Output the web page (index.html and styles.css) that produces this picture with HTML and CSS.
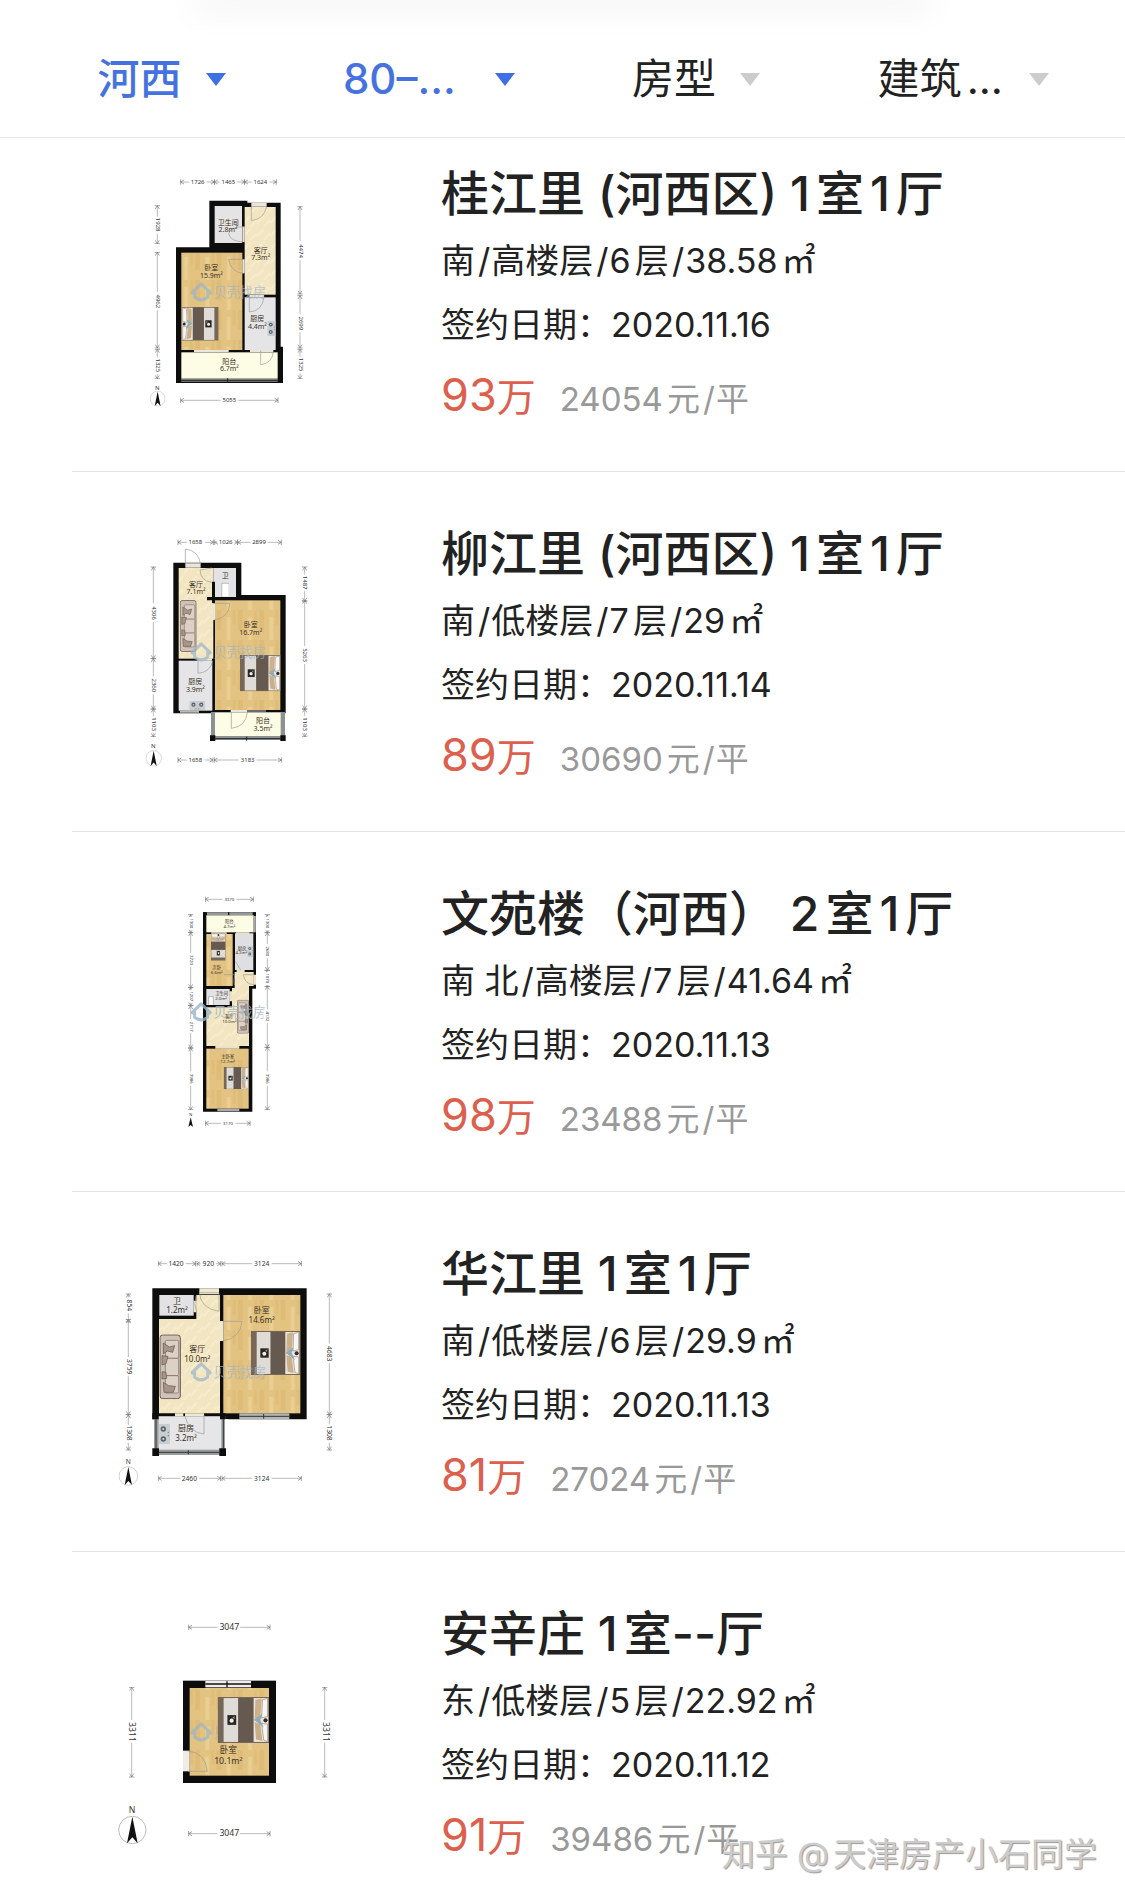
FILE: index.html
```html
<!DOCTYPE html>
<html lang="zh-CN">
<head>
<meta charset="utf-8">
<meta name="viewport" content="width=device-width, initial-scale=1">
<title>成交房源</title>
<link rel="stylesheet" href="styles.css">
</head>
<body>
<svg class="defs" aria-hidden="true">
  <defs>
    <pattern id="wood" width="64" height="90" patternUnits="userSpaceOnUse">
      <rect width="64" height="90" fill="#e3c381"/>
      <rect width="14" height="60" fill="#debb76"/>
      <rect x="30" y="20" width="12" height="70" fill="#eace92"/>
      <rect x="48" width="9" height="44" fill="#dfbd79"/>
    </pattern>
    <pattern id="marble" width="40" height="40" patternUnits="userSpaceOnUse">
      <rect width="40" height="40" fill="#f2e6c2"/>
      <path d="M0 30L20 8M22 40L40 20" stroke="#f8edcf" stroke-width="5"/>
    </pattern>
    <marker id="tip" viewBox="0 0 14 18" refX="12" refY="9" markerWidth="14" markerHeight="18" markerUnits="userSpaceOnUse" orient="auto-start-reverse">
      <path d="M2 3L12 9L2 15M12 1V17" fill="none" stroke="#777" stroke-width="2"/>
    </marker>
    <symbol id="bed" viewBox="0 0 147 132" preserveAspectRatio="none">
      <rect width="147" height="132" fill="#776758"/>
      <rect x="17" y="3" width="42" height="126" fill="#dfdbd6"/>
      <rect x="59" y="3" width="44" height="126" fill="#655950"/>
      <rect x="103" y="3" width="42" height="126" fill="#e9e5df"/>
      <path d="M108 8L126 4L122 60L106 66Z" fill="#cdb18a"/>
      <path d="M106 72L122 78L128 126L110 122Z" fill="#c9ae88"/>
      <path d="M128 8L143 4L143 56L126 60ZM126 76L143 78L143 128L132 124Z" fill="#f8f6f2" stroke="#9a8d7e" stroke-width="2"/>
      <path d="M104 66L128 48L122 66L132 88L118 76Z" fill="#8eabb6"/>
      <circle cx="137" cy="67" r="6" fill="#332d2b"/>
      <rect x="28" y="52" width="25" height="28" fill="#29251f"/>
      <circle cx="40" cy="68" r="6" fill="#eee"/>
      <path d="M42 59L49 55L48 63Z" fill="#9f9b7e"/>
    </symbol>
    <symbol id="sofa" viewBox="0 0 65 195" preserveAspectRatio="none">
      <rect x="2" y="2" width="61" height="191" rx="8" fill="#d0c2b6" stroke="#675a52" stroke-width="3"/>
      <rect x="18" y="18" width="40" height="54" rx="4" fill="#ddd0c4" stroke="#75675d" stroke-width="2"/>
      <rect x="18" y="72" width="40" height="52" rx="4" fill="#ddd0c4" stroke="#75675d" stroke-width="2"/>
      <rect x="18" y="124" width="40" height="52" rx="4" fill="#ddd0c4" stroke="#75675d" stroke-width="2"/>
      <path d="M12 26L30 38L46 34L40 54L24 50L12 58ZM8 64L26 66L20 88L8 92ZM8 112L20 114L22 132L8 134ZM12 144L28 154L48 156L42 174L14 174Z" fill="#a7958a" stroke="#5d514a" stroke-width="2"/>
    </symbol>
    <symbol id="stove" viewBox="0 0 34 62" preserveAspectRatio="none">
      <rect width="34" height="62" fill="#c8cdd1"/>
      <circle cx="14" cy="16" r="8" fill="#59626a"/><circle cx="14" cy="46" r="8" fill="#59626a"/>
      <circle cx="14" cy="16" r="3" fill="#ddd"/><circle cx="14" cy="46" r="3" fill="#ddd"/>
      <circle cx="29" cy="26" r="2" fill="#777"/><circle cx="29" cy="36" r="2" fill="#777"/>
    </symbol>
    <symbol id="north" viewBox="0 0 88 88">
      <circle cx="44" cy="44" r="41" fill="#fff" stroke="#bcbcbc" stroke-width="3"/>
      <path d="M44 4L60 84L44 66L28 84Z" fill="#111"/>
    </symbol>
    <symbol id="brand" viewBox="0 0 240 64">
      <path d="M12 36L4 32L32 5L60 32L52 36M12 28V46Q32 62 52 46V28" fill="none" stroke="#9ab4cc" stroke-width="9" stroke-linejoin="round"/>
      <text x="70" y="46" font-size="40" fill="#9fb6ca">贝壳找房</text>
    </symbol>
  </defs>
</svg>

<header class="filters">
  <div class="card-shade"></div>
  <nav class="filter-row" aria-label="筛选">
    <button class="filter active" type="button"><span>河西</span></button>
    <button class="filter active wide" type="button"><span>80–...</span></button>
    <button class="filter" type="button"><span>房型</span></button>
    <button class="filter wide" type="button"><span>建筑...</span></button>
  </nav>
</header>

<main class="list">
  <article class="item">
    <svg class="plan" viewBox="0 -3 720 786" role="img" aria-label="桂江里户型图">
      <path d="M298 122H412V128H512V560H519V669H198V262H298Z" fill="#0d0d0d"/>
      <rect x="314" y="138" width="82" height="111" fill="#e5e4e5"/>
      <rect x="404" y="141" width="93" height="263" fill="url(#marble)"/>
      <rect x="214" y="278" width="183" height="292" fill="url(#wood)"/>
      <rect x="404" y="412" width="93" height="158" fill="#e5e5e7"/>
      <rect x="214" y="577" width="289" height="79" fill="#fdfce4"/>
      <path d="M424 128H470V140H424ZM397 200H404V246H397ZM397 298H404V340H397ZM418 405H462V412H418ZM252 570H356V576H252ZM420 570H490V576H420Z" fill="#ebe6dc"/>
      <path d="M214 661H503" stroke="#8a8d8d" stroke-width="8"/><path d="M214 661H503M353 655V667" stroke="#222" stroke-width="3"/>
      <path class="door" d="M424 134V182Q462 178 470 140M404 200Q358 200 356 222Q362 244 400 246M404 298H356Q362 336 400 340M418 410V456Q456 454 462 412M452 572V614Q486 610 490 576"/>
      <use href="#bed" x="-326" y="441" width="111" height="101" transform="scale(-1 1)"/>
      <use href="#stove" x="472" y="482" width="25" height="46"/>
      <use href="#brand" x="242" y="366" width="236" height="64" opacity=".7"/>
      <g class="room"><text x="355" y="195">卫生间</text><text x="354" y="217">2.8m²</text><text x="452" y="278">客厅</text><text x="452" y="300">7.3m²</text><text x="304" y="331">卧室</text><text x="304" y="353">15.9m²</text><text x="442" y="484">厨房</text><text x="442" y="507">4.4m²</text><text x="358" y="612">阳台</text><text x="358" y="634">6.7m²</text></g>
      <g class="dim"><path d="M212 66H313"/><path d="M313 66H404"/><path d="M404 66H499"/><path d="M142 137V251"/><path d="M142 277V564"/><path d="M142 568V656"/><path d="M570 140V402"/><path d="M570 407V564"/><path d="M570 568V656"/><path d="M212 721H504"/></g>
      <g class="num"><text x="263" y="72">1726</text><text x="355" y="72">1465</text><text x="451" y="72">1624</text><text x="358" y="727">5055</text><text transform="translate(137 194) rotate(90)">1928</text><text transform="translate(137 424) rotate(90)">4962</text><text transform="translate(137 616) rotate(90)">1325</text><text transform="translate(566 273) rotate(90)">4474</text><text transform="translate(566 490) rotate(90)">2699</text><text transform="translate(566 614) rotate(90)">1325</text><text x="142" y="690">N</text></g>
      <use href="#north" x="119" y="692" width="48" height="48"/>
    </svg>
    <div class="info">
      <h2>桂江里 (河西区) 1室1厅</h2>
      <p>南<i>/</i>高楼层<i>/</i>6层<i>/</i>38.58<b>㎡</b></p>
      <p>签约日期：2020.11.16</p>
      <div class="cost"><strong>93<small>万</small></strong><span>24054元<i>/</i>平</span></div>
    </div>
  </article>

  <article class="item">
    <svg class="plan" viewBox="0 -3 720 786" role="img" aria-label="柳江里户型图">
      <path d="M190 128H394V225H527V580H190Z" fill="#0d0d0d"/>
      <rect x="206" y="144" width="104" height="272" fill="url(#marble)"/>
      <rect x="310" y="144" width="68" height="87" fill="#e3e3e5"/>
      <rect x="206" y="422" width="101" height="150" fill="#e5e5e7"/>
      <rect x="315" y="241" width="196" height="329" fill="url(#wood)"/>
      <rect x="303" y="576" width="222" height="84" fill="#8e9191"/>
      <rect x="315" y="578" width="197" height="70" fill="#fdfce4"/>
      <path d="M300 646H316V663H300ZM511 646H527V663H511ZM306 185H315V250H306ZM291 231H315V241H291Z" fill="#0d0d0d"/>
      <path d="M226 130H272V143H226ZM306 250H315V300H306ZM262 415H306V422H262ZM362 570H412V577H362ZM210 572H267V580H210Z" fill="#ebe6dc"/>
      <path d="M412 573H468M210 577H267" stroke="#8a8d8d" stroke-width="5"/><path d="M316 656H511M410 650V662" stroke="#222" stroke-width="3"/>
      <path class="door" d="M226 136V87Q268 92 272 136M306 144L270 150Q272 184 306 187M312 250H360Q356 294 312 300M264 418V460Q302 456 308 422M364 576V625Q408 620 412 577"/>
      <path d="M336 230V190H356" fill="none" stroke="#8a8a8a" stroke-width="2"/><rect x="337" y="191" width="18" height="38" fill="#fff"/>
      <use href="#sofa" x="209" y="240" width="51" height="156"/>
      <use href="#bed" x="390" y="405" width="122" height="109"/>
      <use href="#stove" transform="translate(286 543) rotate(90)" width="27" height="48"/>
      <use href="#brand" x="242" y="366" width="236" height="64" opacity=".7"/>
      <g class="room"><text x="258" y="201">客厅</text><text x="258" y="223">7.1m²</text><text x="346" y="175">卫</text><text x="422" y="322">卧室</text><text x="422" y="344">16.7m²</text><text x="256" y="493">厨房</text><text x="256" y="515">3.9m²</text><text x="459" y="610">阳台</text><text x="459" y="633">3.5m²</text></g>
      <g class="dim"><path d="M204 67H310"/><path d="M314 67H383"/><path d="M383 67H514"/><path d="M130 141V416"/><path d="M130 416V567"/><path d="M130 567V650"/><path d="M584 141V244"/><path d="M584 241V567"/><path d="M584 567V650"/><path d="M204 720H309"/><path d="M313 720H514"/></g>
      <g class="num"><text x="256" y="73">1658</text><text x="347" y="73">1026</text><text x="447" y="73">2899</text><text x="256" y="726">1658</text><text x="413" y="726">3183</text><text transform="translate(126 279) rotate(90)">4306</text><text transform="translate(126 496) rotate(90)">2360</text><text transform="translate(126 612) rotate(90)">1103</text><text transform="translate(580 188) rotate(90)">1487</text><text transform="translate(580 405) rotate(90)">5263</text><text transform="translate(580 612) rotate(90)">1103</text><text x="130" y="684">N</text></g>
      <use href="#north" x="106" y="690" width="50" height="50"/>
    </svg>
    <div class="info">
      <h2>柳江里 (河西区) 1室1厅</h2>
      <p>南<i>/</i>低楼层<i>/</i>7层<i>/</i>29<b>㎡</b></p>
      <p>签约日期：2020.11.14</p>
      <div class="cost"><strong>89<small>万</small></strong><span>30690元<i>/</i>平</span></div>
    </div>
  </article>

  <article class="item">
    <svg class="plan" viewBox="0 -3 720 786" role="img" aria-label="文苑楼户型图">
      <path d="M279 97H438V326H427V695H279Z" fill="#0d0d0d"/>
      <rect x="289" y="97" width="140" height="9" fill="#969a9a"/><path d="M279 97H291V106H279ZM428 97H438V108H428ZM354 97H358V106H354Z" fill="#0d0d0d"/>
      <rect x="289" y="106" width="142" height="51" fill="#fdfce4"/>
      <rect x="289" y="162" width="79" height="156" fill="url(#wood)"/>
      <rect x="375" y="160" width="55" height="110" fill="#dfdfe2"/>
      <path d="M374 276H431V318H417V498H289V382H366V324H374Z" fill="url(#marble)"/>
      <rect x="289" y="327" width="70" height="48" fill="#e3e3e6"/>
      <rect x="289" y="506" width="127" height="180" fill="url(#wood)"/>
      <path d="M304 157H350V162H304ZM378 157H418V162H378ZM380 269H404V276H380ZM430 284H438V314H430ZM316 498H388V506H316ZM358 334H366V364H358Z" fill="#ece3c6"/>
      <path d="M322 690H388M434 108V157" stroke="#aaa" stroke-width="7"/>
      <path class="door" d="M342 284H374Q370 312 374 316M392 270L376 244M430 284H400Q404 312 430 314"/>
      <use href="#bed" transform="translate(303 242) rotate(-90)" width="82" height="44"/>
      <use href="#bed" x="341" y="561" width="75" height="67"/>
      <use href="#sofa" x="-417" y="359" width="36" height="102" transform="scale(-1 1)"/>
      <use href="#stove" x="412" y="197" width="18" height="34"/>
      <path d="M296 374V350H310V374" fill="#fff" stroke="#999" stroke-width="2"/>
      <use href="#brand" x="242" y="366" width="236" height="64" opacity=".8"/>
      <g class="room small"><text x="358" y="129">阳台</text><text x="358" y="143">4.7m²</text><text x="320" y="268">次卧</text><text x="320" y="282">6.6m²</text><text x="396" y="210">厨房</text><text x="394" y="223">4.2m²</text><text x="335" y="346">卫生间</text><text x="333" y="360">2.0m²</text><text x="358" y="415">客厅</text><text x="358" y="430">10.0m²</text><text x="353" y="533">主卧室</text><text x="353" y="548">12.7m²</text></g>
      <g class="dim"><path d="M286 58H430"/><path d="M242 104V158"/><path d="M242 158V323"/><path d="M242 323V377"/><path d="M242 377V504"/><path d="M242 504V689"/><path d="M472 104V158"/><path d="M472 158V271"/><path d="M472 271V319"/><path d="M472 319V502"/><path d="M472 502V689"/><path d="M286 730H420"/></g>
      <g class="num small"><text x="358" y="62">3370</text><text x="354" y="734">3170</text><text transform="translate(239 130) rotate(90)">1300</text><text transform="translate(239 240) rotate(90)">3720</text><text transform="translate(239 349) rotate(90)">1207</text><text transform="translate(239 440) rotate(90)">2717</text><text transform="translate(239 596) rotate(90)">3986</text><text transform="translate(469 130) rotate(90)">1300</text><text transform="translate(469 214) rotate(90)">2680</text><text transform="translate(469 295) rotate(90)">1070</text><text transform="translate(469 409) rotate(90)">4132</text><text transform="translate(469 596) rotate(90)">3986</text><text x="242" y="709">N</text></g>
      <path d="M242 712L249 741L242 735L235 741Z" fill="#111"/>
    </svg>
    <div class="info">
      <h2>文苑楼（河西） 2室1厅</h2>
      <p>南 北<i>/</i>高楼层<i>/</i>7层<i>/</i>41.64<b>㎡</b></p>
      <p>签约日期：2020.11.13</p>
      <div class="cost"><strong>98<small>万</small></strong><span>23488元<i>/</i>平</span></div>
    </div>
  </article>

  <article class="item">
    <svg class="plan" viewBox="0 -3 720 786" role="img" aria-label="华江里户型图">
      <path d="M127 145H590V538H127Z" fill="#0d0d0d"/>
      <path d="M132 528H346V645H132Z" fill="#9b9e9e"/><rect x="345" y="538" width="10" height="110" fill="#fff"/>
      <path d="M147 237H259V165H330V520H147Z" fill="url(#marble)"/>
      <rect x="148" y="165" width="103" height="62" fill="#e2e2e5"/>
      <rect x="340" y="165" width="231" height="355" fill="url(#wood)"/>
      <rect x="146" y="530" width="188" height="99" fill="#e6e5e7"/>
      <path d="M127 520H146V538H127ZM127 625H147V648H127ZM328 625H348V648H328ZM330 520H346V538H330Z" fill="#0d0d0d"/>
      <path d="M268 145H327V163H268ZM251 182H260V217H251ZM330 243H340V303H330ZM225 520H282V529H225ZM195 520H220V529H195Z" fill="#f0e9d2"/>
      <rect x="388" y="520" width="150" height="17" fill="#b4b6b6"/><path d="M388 529H538M461 522V536M147 637H328M235 631V643M138 538V625M340 538V625" stroke="#333" stroke-width="3"/>
      <path class="door" d="M268 158H327V214Q272 206 268 158M258 168Q250 190 260 217M338 244H396Q392 294 338 303M282 524V582Q236 578 225 528"/>
      <use href="#sofa" x="148" y="283" width="65" height="195"/>
      <use href="#bed" x="423" y="273" width="147" height="132"/>
      <use href="#stove" x="146" y="551" width="34" height="62"/>
      <use href="#brand" x="242" y="366" width="236" height="64" opacity=".7"/>
      <g class="room big"><text x="201" y="191">卫</text><text x="201" y="219">1.2m²</text><text x="455" y="219">卧室</text><text x="455" y="249">14.6m²</text><text x="262" y="335">客厅</text><text x="262" y="365">10.0m²</text><text x="228" y="573">厨房</text><text x="228" y="603">3.2m²</text></g>
      <g class="dim"><path d="M145 71H257"/><path d="M261 71H332"/><path d="M336 71H574"/><path d="M55 162V246"/><path d="M55 238V524"/><path d="M55 524V630"/><path d="M658 162V524"/><path d="M658 524V630"/><path d="M145 715H332"/><path d="M336 715H574"/></g>
      <g class="num big"><text x="198" y="78">1420</text><text x="295" y="78">920</text><text x="455" y="78">3124</text><text x="238" y="722">2460</text><text x="455" y="722">3124</text><text transform="translate(50 196) rotate(90)">854</text><text transform="translate(50 380) rotate(90)">3759</text><text transform="translate(50 579) rotate(90)">1308</text><text transform="translate(652 341) rotate(90)">4683</text><text transform="translate(652 579) rotate(90)">1308</text><text x="55" y="671">N</text></g>
      <use href="#north" x="25" y="678" width="60" height="60"/>
    </svg>
    <div class="info">
      <h2>华江里 1室1厅</h2>
      <p>南<i>/</i>低楼层<i>/</i>6层<i>/</i>29.9<b>㎡</b></p>
      <p>签约日期：2020.11.13</p>
      <div class="cost"><strong>81<small>万</small></strong><span>27024元<i>/</i>平</span></div>
    </div>
  </article>

  <article class="item">
    <svg class="plan" viewBox="0 -3 720 786" role="img" aria-label="安辛庄户型图">
      <rect x="219" y="242" width="279" height="307" fill="#0d0d0d"/>
      <rect x="239" y="264" width="238" height="263" fill="url(#wood)"/>
      <rect x="286" y="243" width="137" height="19" fill="#f0ecea"/><path d="M286 252H423M351 244V262" stroke="#111" stroke-width="4"/>
      <rect x="219" y="452" width="20" height="62" fill="#f0ebe3"/>
      <path class="door" d="M232 453Q286 456 292 514H234"/>
      <use href="#brand" x="242" y="366" width="236" height="64" opacity=".7"/>
      <use href="#bed" x="323" y="291" width="154" height="138"/>
      <g class="room large"><text x="355" y="460">卧室</text><text x="355" y="491">10.1m²</text></g>
      <g class="dim"><path d="M236 82H480"/><path d="M236 701H480"/><path d="M65 262V531"/><path d="M644 262V531"/></g>
      <g class="num large"><text x="358" y="91">3047</text><text x="358" y="709">3047</text><text transform="translate(57 396) rotate(90)">3311</text><text transform="translate(638 396) rotate(90)">3311</text><text x="66" y="639">N</text></g>
      <use href="#north" x="23" y="646" width="88" height="88"/>
    </svg>
    <div class="info">
      <h2>安辛庄 1室--厅</h2>
      <p>东<i>/</i>低楼层<i>/</i>5层<i>/</i>22.92<b>㎡</b></p>
      <p>签约日期：2020.11.12</p>
      <div class="cost"><strong>91<small>万</small></strong><span>39486元<i>/</i>平</span></div>
    </div>
  </article>
  <div class="credit">知乎 @天津房产小石同学</div>
</main>
</body>
</html>
```
FILE: styles.css
```css
* {
  box-sizing: border-box;
}

body {
  margin: 0;
  background: #fff;
  color: #222;
  font-family: Inter, "Noto Sans CJK SC", sans-serif;
  text-autospace: normal;
}

.defs {
  position: absolute;
  width: 0;
  height: 0;
}

.filters {
  overflow: hidden;
  border-bottom: 1px solid #e8e8e8;
}

.card-shade {
  height: 0;
  margin: 0 18%;
  box-shadow: 0 0 36px 10px rgba(0, 0, 0, 0.06);
}

.filter-row {
  display: grid;
  grid-template-columns: repeat(4, 1fr);
  padding: 48px 28px 27px;
}

.filter {
  display: flex;
  align-items: center;
  justify-content: center;
  gap: 24px;
  padding: 0;
  border: 0;
  background: none;
  color: #222;
  font: inherit;
  font-size: 42px;
  line-height: 62px;
  text-align: left;
}

.filter.wide span {
  min-width: 128px;
}

.filter::after {
  content: "";
  border: 10px solid transparent;
  border-top: 13px solid #ccc;
  border-bottom: 0;
}

.filter.active {
  color: #4672df;
  font-weight: 500;
}

.filter.active::after {
  border-top-color: #3f6fe4;
}

.list {
  position: relative;
}

.item {
  display: flex;
  gap: 91px;
  margin-left: 72px;
  padding: 47px 0 34px 38px;
  border-bottom: 1px solid #e4e4e4;
}

.item:first-child {
  padding-top: 21px;
}

.item:nth-child(5) {
  padding-bottom: 22px;
  border-bottom: 0;
}

.plan {
  flex: none;
  width: 240px;
  height: 262px;
}

.info {
  flex: 1;
  white-space: nowrap;
}

h2 {
  margin: 0;
  font-size: 48px;
  font-weight: 500;
  line-height: 70px;
}

p {
  margin: 0;
  font-size: 34px;
  line-height: 64px;
}

i {
  margin: 0 1px 0 3px;
  font-style: normal;
}

b {
  margin-left: 4px;
  font-weight: 400;
}

.cost {
  display: flex;
  align-items: baseline;
  gap: 24px;
  min-height: 80px;
  padding-top: 8px;
  line-height: 60px;
}

.cost strong {
  color: #dc604d;
  font-size: 45px;
  font-weight: 400;
  text-autospace: no-autospace;
}

.cost small {
  font-size: 39px;
}

.cost span {
  color: #999;
  font-size: 33px;
}

.credit {
  position: absolute;
  right: 28px;
  bottom: 20px;
  color: #ccc;
  font-size: 33px;
  line-height: 50px;
  text-shadow: 1px 1px 1px #999;
}

.door {
  fill: none;
  stroke: #9c9a92;
  stroke-width: 2;
}

.room {
  fill: #3a3226;
  font-family: "Noto Sans", "Noto Sans CJK SC", sans-serif;
  font-size: 21px;
  text-anchor: middle;
}

.num {
  fill: #333;
  stroke: #fff;
  stroke-width: 14px;
  paint-order: stroke;
  font-family: "Noto Sans", sans-serif;
  font-size: 18px;
  text-anchor: middle;
}

.room.small,
.num.small {
  font-size: 13px;
}

.room.big {
  font-size: 24px;
}

.num.big {
  font-size: 20px;
}

.room.large,
.num.large {
  font-size: 26px;
}

.dim path {
  fill: none;
  stroke: #999;
  stroke-width: 2;
  marker-start: url(#tip);
  marker-end: url(#tip);
}
```
